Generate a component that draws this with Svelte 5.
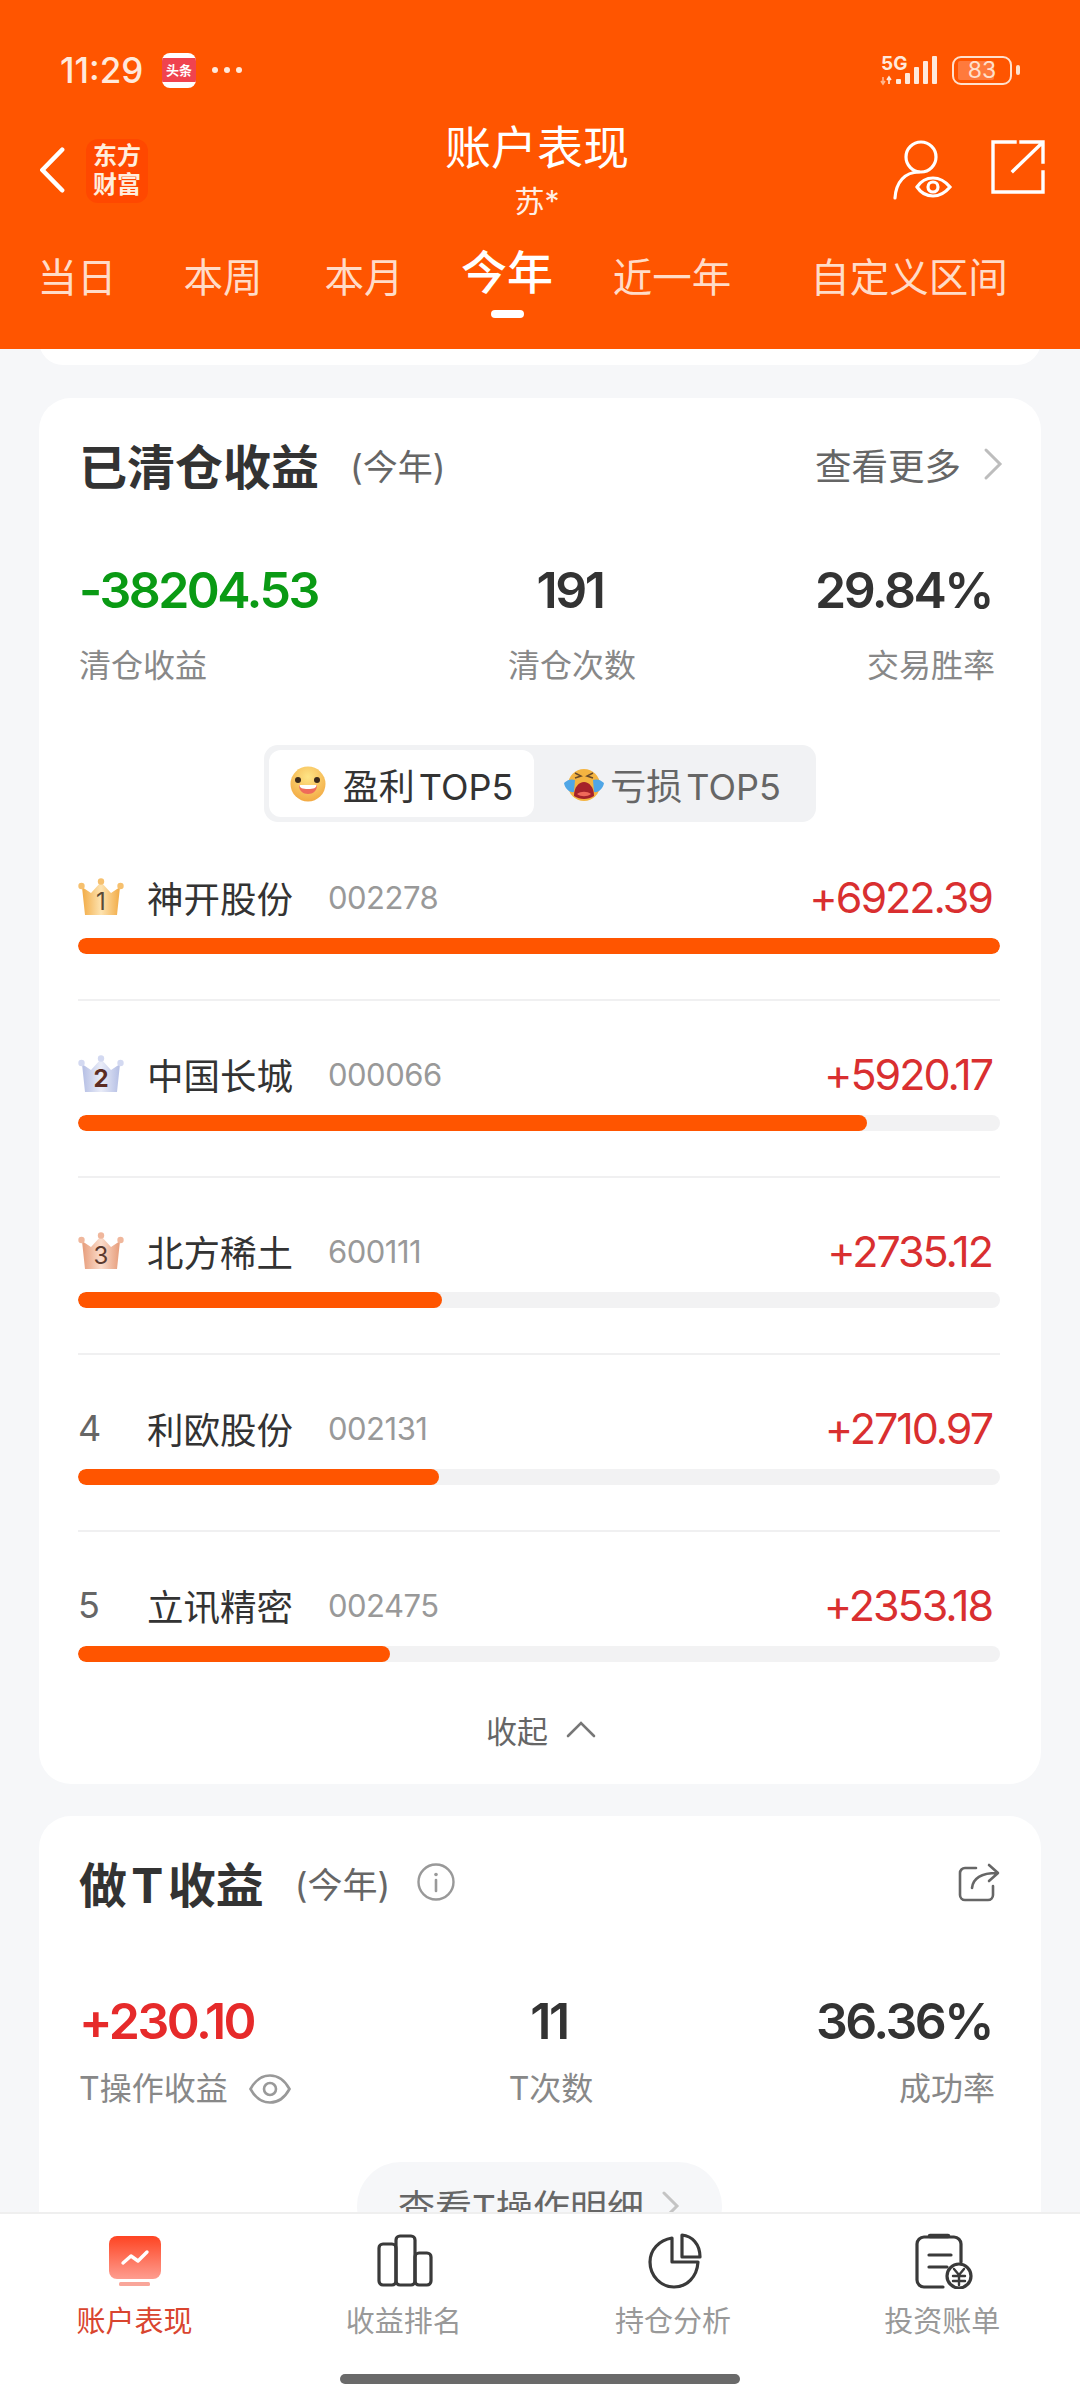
<script lang="ts">
  const tabs = ["当日", "本周", "本月", "今年", "近一年", "自定义区间"];
  const activeTab = 3;

  const rows = [
    { rank: 1, name: "神开股份", code: "002278", value: "+6922.39", pct: 100 },
    { rank: 2, name: "中国长城", code: "000066", value: "+5920.17", pct: 85.6 },
    { rank: 3, name: "北方稀土", code: "600111", value: "+2735.12", pct: 39.5 },
    { rank: 4, name: "利欧股份", code: "002131", value: "+2710.97", pct: 39.1 },
    { rank: 5, name: "立讯精密", code: "002475", value: "+2353.18", pct: 33.8 },
  ];

  const crowns: Record<number, { top: string; mid: string; num: string; ball: string }> = {
    1: { top: "#f2ab45", mid: "#fde3b0", num: "#5b4a35", ball: "#f6c06e" },
    2: { top: "#b4bee4", mid: "#e9ecf8", num: "#5c2c22", ball: "#d3d9f1" },
    3: { top: "#e69c7a", mid: "#fbdccb", num: "#5b3a2e", ball: "#f0b79c" },
  };
</script>

<div class="page">
  <header class="top">
    <div class="status">
      <div class="status-left">
        <span class="time">11:29</span>
        <span class="news"><span class="news-band">头条</span></span>
        <span class="dots"><i></i><i></i><i></i></span>
      </div>
      <div class="status-right">
        <svg width="60" height="34" viewBox="0 0 60 34">
          <text x="1" y="17" class="net">5G</text>
          <path d="M3 24v6M1 28l2 3 2-3" stroke="#ffb58c" stroke-width="1.6" fill="none" />
          <path d="M9 31v-6M7 27l2-3 2 3" stroke="#ffe9dc" stroke-width="1.6" fill="none" />
          <rect x="16" y="26" width="5" height="5" rx="1" fill="#ffe9dc" />
          <rect x="25" y="20" width="5" height="11" rx="1" fill="#ffe9dc" />
          <rect x="34" y="14" width="5" height="17" rx="1" fill="#ffe9dc" />
          <rect x="43" y="8" width="5" height="23" rx="1" fill="#ffe9dc" />
          <rect x="52" y="3" width="5" height="28" rx="1" fill="#ffe9dc" />
        </svg>
        <div class="battery">
          <div class="battery-body"><span class="battery-fill"></span><span class="battery-num">83</span></div>
          <span class="battery-cap"></span>
        </div>
      </div>
    </div>

    <div class="nav">
      <div class="nav-left">
        <svg width="28" height="46" viewBox="0 0 28 50" fill="none">
          <path d="M25 3 3.5 25 25 47" stroke="#fff" stroke-width="5" stroke-linecap="round" stroke-linejoin="round" />
        </svg>
        <div class="logo">东方<br />财富</div>
      </div>
      <div class="nav-title">
        <div class="title">账户表现</div>
        <div class="sub">苏*</div>
      </div>
      <div class="nav-right">
        <svg width="60" height="60" viewBox="0 0 60 60" fill="none" stroke="#fff" stroke-width="3.2" stroke-linecap="round">
          <circle cx="28" cy="17" r="15" />
          <path d="M2 58c1-16 10-26 24-26" />
          <path d="M24 47c4-6 10-9 16-9s12 3 17 9c-5 6-11 9-17 9s-12-3-16-9z" />
          <circle cx="40" cy="47" r="5" />
        </svg>
        <svg width="54" height="54" viewBox="0 0 54 54" fill="none" stroke="#fff" stroke-width="3.4" stroke-linecap="square">
          <path d="M24 2H2v50h50V32" />
          <path d="M22 31 51 3M30 2h22v20" />
        </svg>
      </div>
    </div>

    <div class="tabs">
      {#each tabs as tab, i}
        <div class="tab" class:active={i === activeTab}>
          {tab}
          {#if i === activeTab}<span class="indicator"></span>{/if}
        </div>
      {/each}
    </div>
  </header>

  <main class="scroll">
    <div class="prev-card"></div>

    <section class="card first">
      <div class="card-head">
        <h2>已清仓收益</h2>
        <span class="range">(今年)</span>
        <span class="more">查看更多</span>
        <svg class="more-arrow" width="20" height="34" viewBox="0 0 20 34" fill="none">
          <path d="M3 3 17 17 3 31" stroke="#bdbdbd" stroke-width="3" stroke-linecap="round" />
        </svg>
      </div>

      <div class="stats">
        <div>
          <div class="num green">-38204.53</div>
          <div class="label">清仓收益</div>
        </div>
        <div class="center">
          <div class="num">191</div>
          <div class="label">清仓次数</div>
        </div>
        <div class="right">
          <div class="num">29.84%</div>
          <div class="label">交易胜率</div>
        </div>
      </div>

      <div class="toggle-wrap">
        <div class="toggle">
          <div class="toggle-item on">
            <svg width="36" height="36" viewBox="0 0 36 36">
              <defs>
                <radialGradient id="smile" cx="50%" cy="30%" r="75%">
                  <stop offset="0" stop-color="#fee586" />
                  <stop offset="1" stop-color="#f2a63f" />
                </radialGradient>
              </defs>
              <circle cx="18" cy="18" r="17.5" fill="url(#smile)" />
              <circle cx="8" cy="14" r="3" fill="#3c2a1c" />
              <circle cx="27" cy="14" r="3" fill="#3c2a1c" />
              <path d="M9 19h18c0 6-4 9-9 9s-9-3-9-9z" fill="#ef6b5a" />
              <path d="M9.500 19h17c0 3-3 4-8.500 4s-8.500-1-8.500-4z" fill="#fff" />
            </svg>
            <span>盈利 TOP5</span>
          </div>
          <div class="toggle-item">
            <svg width="40" height="34" viewBox="0 0 40 34">
              <circle cx="20" cy="18" r="16" fill="#f4b441" />
              <path d="M11 6l6 3-6 2M29 6l-6 3 6 2" fill="none" stroke="#6a4a2a" stroke-width="1.500" />
              <path d="M0 16c4-4 8-4 11-3l-1 12c-4 1-9-3-10-9zM40 16c-4-4-8-4-11-3l1 12c4 1 9-3 10-9z" fill="#4fa6e6" />
              <path d="M10 29c0-9 5-14 10-14s10 5 10 14c-6 4-14 4-20 0z" fill="#a5222a" />
              <path d="M13 27c4-3 10-3 14 0-4 3-10 3-14 0z" fill="#ef6a5a" />
            </svg>
            <span>亏损 TOP5</span>
          </div>
        </div>
      </div>

      <div class="list">
        {#each rows as row}
          <div class="row">
            <div class="row-main">
              <span class="rank">
                {#if crowns[row.rank]}
                  {@const c = crowns[row.rank]}
                  <svg width="46" height="38" viewBox="0 0 46 38">
                    <defs>
                      <linearGradient id="crown{row.rank}" x1="0" x2="1" y1="0" y2="0">
                        <stop offset="0" stop-color={c.top} />
                        <stop offset="0.5" stop-color={c.mid} />
                        <stop offset="1" stop-color={c.top} />
                      </linearGradient>
                    </defs>
                    <path d="M4 9l9 6 10-11 10 11 9-6-3 28H7z" fill="url(#crown{row.rank})" />
                    <circle cx="3.500" cy="8" r="3.200" fill={c.ball} />
                    <circle cx="23" cy="3.500" r="3.200" fill={c.ball} />
                    <circle cx="42.500" cy="8" r="3.200" fill={c.ball} />
                    <text x="23" y="32" text-anchor="middle" class="crown-num" fill={c.num} font-weight={row.rank === 2 ? 700 : 400}>{row.rank}</text>
                  </svg>
                {:else}
                  {row.rank}
                {/if}
              </span>
              <span class="name">{row.name}</span>
              <span class="code">{row.code}</span>
              <span class="value">{row.value}</span>
            </div>
            <div class="track"><div class="fill" style="width: {row.pct}%"></div></div>
          </div>
        {/each}
      </div>

      <div class="collapse">
        <span>收起</span>
        <svg width="30" height="18" viewBox="0 0 30 18" fill="none">
          <path d="M2 16 15 3l13 13" stroke="#777" stroke-width="2.600" stroke-linecap="round" />
        </svg>
      </div>
    </section>

    <section class="card second">
      <div class="card-head">
        <h2 class="t-title">做 T 收益</h2>
        <span class="range">(今年)</span>
        <svg class="info" width="38" height="38" viewBox="0 0 38 38" fill="none">
          <circle cx="19" cy="19" r="17.500" stroke="#999" stroke-width="2.400" />
          <circle cx="19" cy="11.500" r="1.800" fill="#999" />
          <path d="M19 17v11" stroke="#999" stroke-width="2.600" stroke-linecap="round" />
        </svg>
        <svg class="head-share" width="42" height="40" viewBox="0 0 42 40" fill="none" stroke="#666" stroke-width="2.600" stroke-linecap="round" stroke-linejoin="round">
          <path d="M18 6H7a5 5 0 0 0-5 5v22a5 5 0 0 0 5 5h23a5 5 0 0 0 5-5V24" />
          <path d="M14 26c1-9 8-15 25-15M31 3l9 8-9 8" />
        </svg>
      </div>

      <div class="stats t">
        <div>
          <div class="num red">+230.10</div>
          <div class="label with-eye">
            T操作收益
            <svg width="42" height="32" viewBox="0 0 42 32" fill="none" stroke="#999" stroke-width="2.600">
              <path d="M1.500 16C7 6 14 2.500 21 2.500S35 6 40.500 16C35 26 28 29.500 21 29.500S7 26 1.500 16z" />
              <circle cx="21" cy="16" r="6" />
            </svg>
          </div>
        </div>
        <div class="center">
          <div class="num">11</div>
          <div class="label">T次数</div>
        </div>
        <div class="right">
          <div class="num">36.36%</div>
          <div class="label">成功率</div>
        </div>
      </div>

      <div class="detail-wrap">
        <div class="detail">
          <span>查看T操作明细</span>
          <svg width="18" height="32" viewBox="0 0 18 32" fill="none">
            <path d="M2 3l13 13L2 29" stroke="#c4c4c4" stroke-width="3" stroke-linecap="round" />
          </svg>
        </div>
      </div>
    </section>
  </main>

  <nav class="bottom">
    <div class="bottom-tabs">
      <div class="bottom-tab on">
        <svg width="54" height="54" viewBox="0 0 54 54">
          <defs>
            <linearGradient id="mon" x1="0" x2="0" y1="0" y2="1">
              <stop offset="0" stop-color="#fe4422" />
              <stop offset="1" stop-color="#fe9d90" />
            </linearGradient>
          </defs>
          <rect x="1" y="2" width="52" height="43" rx="8" fill="url(#mon)" />
          <rect x="11" y="48" width="31" height="4" rx="1.500" fill="#f9a69a" />
          <path d="M15 29l8-7 7 5 9-9" fill="none" stroke="#fff" stroke-width="3.400" stroke-linecap="round" stroke-linejoin="round" />
        </svg>
        <span>账户表现</span>
      </div>
      <div class="bottom-tab">
        <svg width="56" height="54" viewBox="0 0 56 54" fill="none" stroke="#3a3a3a" stroke-width="3.200" stroke-linejoin="round">
          <rect x="2" y="10" width="17" height="41" rx="4" />
          <rect x="19" y="2" width="19" height="49" rx="4" />
          <rect x="38" y="19" width="16" height="32" rx="4" />
        </svg>
        <span>收益排名</span>
      </div>
      <div class="bottom-tab">
        <svg width="54" height="56" viewBox="0 0 54 56" fill="none" stroke="#3a3a3a" stroke-width="3.200" stroke-linejoin="round">
          <path d="M24 5C11 7 2 17 2 29c0 14 11 25 24 25 13 0 23-10 24-25H24z" />
          <path d="M34 2c10 1 18 9 18 22H34z" />
        </svg>
        <span>持仓分析</span>
      </div>
      <div class="bottom-tab">
        <svg width="58" height="56" viewBox="0 0 58 56" fill="none" stroke="#3a3a3a" stroke-width="3.200" stroke-linecap="round">
          <path d="M28 54H9a7 7 0 0 1-7-7V11a7 7 0 0 1 7-7h30a7 7 0 0 1 7 7v18" />
          <path d="M15 3h18" stroke-width="4.500" />
          <path d="M14 22h22M14 34h18" />
          <circle cx="44" cy="43" r="12" fill="#fff" />
          <path d="M39 36l5 6 5-6M38 43h12M38 48h12M44 42v10" stroke-width="2.400" />
        </svg>
        <span>投资账单</span>
      </div>
    </div>
    <div class="home-bar"></div>
  </nav>
</div>

<style>
  :global(body) {
    margin: 0;
    background: #f6f7f9;
  }

  .page {
    width: 1080px;
    height: 2400px;
    display: flex;
    flex-direction: column;
    overflow: hidden;
    font-family: Inter, "Noto Sans CJK SC", sans-serif;
    color: #333;
    background: #f6f7f9;
  }

  /* header */
  .top {
    height: 349px;
    flex-shrink: 0;
    background: #ff5500;
    color: #fff;
    box-sizing: border-box;
  }

  .status {
    height: 119px;
    box-sizing: border-box;
    padding: 46px 60px 0 60px;
    display: flex;
    justify-content: space-between;
    align-items: flex-start;
  }

  .status-left {
    display: flex;
    align-items: center;
    height: 48px;
  }

  .time {
    font-size: 35px;
    font-weight: 500;
    color: #ffe9dc;
    width: 102px;
  }

  .news {
    width: 34px;
    height: 35px;
    border-radius: 8px;
    background: #fff;
    display: flex;
    align-items: center;
    overflow: hidden;
  }

  .news-band {
    width: 100%;
    background: #f0434f;
    color: #fff;
    font-size: 13px;
    line-height: 24px;
    font-weight: 700;
    text-align: center;
  }

  .dots {
    display: flex;
    gap: 6px;
    margin-left: 16px;
  }

  .dots i {
    width: 6px;
    height: 6px;
    border-radius: 50%;
    background: #ffe9dc;
  }

  .status-right {
    display: flex;
    align-items: center;
    gap: 12px;
    height: 48px;
  }

  .net {
    font-size: 19px;
    font-weight: 700;
    fill: #ffe9dc;
  }

  .battery {
    display: flex;
    align-items: center;
    gap: 4px;
  }

  .battery-body {
    position: relative;
    width: 60px;
    height: 29px;
    box-sizing: border-box;
    border: 2.500px solid #ffe0cd;
    border-radius: 9px;
    display: flex;
    align-items: center;
    justify-content: center;
  }

  .battery-fill {
    position: absolute;
    left: 4px;
    top: 3px;
    bottom: 3px;
    width: 36px;
    background: #ff7a3c;
    border-radius: 2px;
  }

  .battery-num {
    position: relative;
    font-size: 23px;
    line-height: 1;
    color: #ffe0cd;
  }

  .battery-cap {
    width: 4px;
    height: 10px;
    background: #ffe0cd;
    border-radius: 2px;
  }

  .nav {
    display: grid;
    grid-template-columns: 1fr auto 1fr;
    height: 128px;
  }

  .nav-left {
    display: flex;
    align-items: flex-start;
    padding: 28px 0 0 38px;
    gap: 20px;
  }

  .logo {
    width: 62px;
    height: 64px;
    margin-top: -8px;
    border-radius: 12px;
    background: #ff4800;
    font-size: 24px;
    line-height: 29px;
    font-weight: 700;
    text-align: center;
    padding-top: 3px;
    box-sizing: border-box;
    font-family: "Liberation Serif", "Noto Sans CJK SC", serif;
    color: #ffeedd;
  }

  .nav-title {
    text-align: center;
    padding-right: 6px;
  }

  .title {
    font-size: 46px;
    line-height: 56px;
  }

  .sub {
    font-size: 30px;
    line-height: 40px;
    margin-top: 6px;
    color: #ffeee4;
  }

  .nav-right {
    display: flex;
    justify-content: flex-end;
    align-items: flex-start;
    gap: 38px;
    padding: 21px 35px 0 0;
  }

  .tabs {
    display: grid;
    grid-template-columns: 154px 138px 144px 142px 188px 286px;
    align-items: start;
  }

  .tab {
    font-size: 39.500px;
    line-height: 62px;
    text-align: center;
    color: #ffdcc8;
    position: relative;
  }

  .tab.active {
    font-size: 46px;
    line-height: 50px;
    font-weight: 500;
    color: #fff;
  }

  .indicator {
    position: absolute;
    left: 50%;
    top: 63px;
    width: 33px;
    height: 8px;
    margin-left: -16px;
    border-radius: 4px;
    background: #fff;
  }

  /* scrolling content */
  .scroll {
    flex: 1;
    min-height: 0;
    overflow: hidden;
  }

  .prev-card {
    height: 48px;
    margin: -32px 39px 0;
    background: #fff;
    border-radius: 32px;
  }

  .card {
    margin: 33px 39px 0;
    padding: 32px 41px 33px 39px;
    background: #fff;
    border-radius: 32px;
  }

  .card.second {
    margin-top: 32px;
  }

  .card-head {
    display: flex;
    align-items: center;
    height: 68px;
    padding: 0 0 0 1px;
  }

  h2 {
    margin: 0;
    font-size: 48px;
    font-weight: 700;
    color: #333;
  }

  .t-title {
    word-spacing: -7px;
  }

  .range {
    margin-left: 31px;
    font-size: 35px;
    color: #666;
  }

  .more {
    margin-left: auto;
    font-size: 36.500px;
    color: #666;
  }

  .more-arrow {
    margin-left: 22px;
    margin-right: -3px;
  }

  .info {
    margin-left: 27px;
  }

  .head-share {
    margin-left: auto;
  }

  .stats {
    display: grid;
    grid-template-columns: 352px 282px 1fr;
    margin-top: 62px;
    padding: 0 8px 0 1px;
  }

  .stats.t {
    grid-template-columns: 332px 280px 1fr;
    margin-top: 75px;
  }

  .center {
    text-align: center;
  }

  .center .num {
    margin-right: 4px;
  }

  .right {
    text-align: right;
  }

  .right .label {
    margin-right: -3px;
  }

  .num {
    font-size: 50px;
    line-height: 60px;
    font-weight: 600;
    color: #333;
    letter-spacing: -2.500px;
  }

  .green {
    color: #0a9a14;
  }

  .red {
    color: #e62a2a;
  }

  .label {
    margin-top: 24px;
    font-size: 32px;
    line-height: 44px;
    color: #888;
  }

  .stats.t .label {
    margin-top: 16px;
  }

  .with-eye {
    display: flex;
    align-items: center;
    gap: 21px;
  }

  .toggle-wrap {
    display: flex;
    justify-content: center;
    margin-top: 57px;
    padding-left: 2px;
  }

  .toggle {
    width: 552px;
    height: 77px;
    box-sizing: border-box;
    padding: 5px;
    display: flex;
    background: #f1f2f4;
    border-radius: 14px;
  }

  .toggle-item {
    flex: 1;
    display: flex;
    align-items: center;
    justify-content: center;
    gap: 6px;
    font-size: 36px;
    color: #666;
    border-radius: 12px;
    word-spacing: -6px;
  }

  .toggle-item.on {
    flex: 0 0 265px;
    gap: 17px;
    background: #fff;
    color: #333;
  }

  .list {
    margin-top: 2px;
  }

  .row {
    padding: 47px 0 45px;
    border-bottom: 2px solid #f0f0f1;
  }

  .row:last-child {
    border-bottom: none;
    padding-bottom: 0;
  }

  .row-main {
    display: flex;
    align-items: center;
    height: 52px;
    padding-right: 8px;
  }

  .rank {
    width: 69px;
    font-size: 36px;
    color: #666;
    display: flex;
    align-items: center;
  }

  .crown-num {
    font-size: 24px;
  }

  .name {
    width: 181px;
    font-size: 36.500px;
    color: #333;
  }

  .code {
    font-size: 31px;
    letter-spacing: -0.500px;
    color: #999;
  }

  .value {
    margin-left: auto;
    font-size: 43px;
    color: #d92f30;
    letter-spacing: -2px;
  }

  .track {
    margin-top: 15px;
    height: 16px;
    border-radius: 8px;
    background: #f2f2f3;
    overflow: hidden;
  }

  .fill {
    height: 100%;
    border-radius: 8px;
    background: #ff5500;
  }

  .collapse {
    margin-top: 45px;
    height: 44px;
    display: flex;
    align-items: center;
    justify-content: center;
    gap: 18px;
    font-size: 31px;
    color: #666;
    padding-left: 4px;
  }

  .detail-wrap {
    margin-top: 51px;
    display: flex;
    justify-content: center;
  }

  .detail {
    width: 365px;
    height: 88px;
    box-sizing: border-box;
    display: flex;
    align-items: center;
    justify-content: center;
    gap: 18px;
    border-radius: 44px;
    background: #f6f7f9;
    font-size: 37px;
    color: #666;
  }

  /* bottom bar */
  .bottom {
    height: 188px;
    flex-shrink: 0;
    box-sizing: border-box;
    background: #fff;
    border-top: 2px solid #efefef;
  }

  .bottom-tabs {
    display: grid;
    grid-template-columns: repeat(4, 1fr);
    padding: 19px 3px 0 0;
  }

  .bottom-tab {
    display: flex;
    flex-direction: column;
    align-items: center;
    font-size: 29px;
    color: #999;
  }

  .bottom-tab svg {
    height: 56px;
  }

  .bottom-tab:not(.on) svg {
    margin-left: 3px;
  }

  .bottom-tab span {
    margin-top: 13px;
    line-height: 40px;
  }

  .bottom-tab.on {
    color: #d9452f;
  }

  .home-bar {
    width: 400px;
    height: 10px;
    margin: 32px auto 0;
    border-radius: 5px;
    background: #6a6a6a;
  }
</style>
